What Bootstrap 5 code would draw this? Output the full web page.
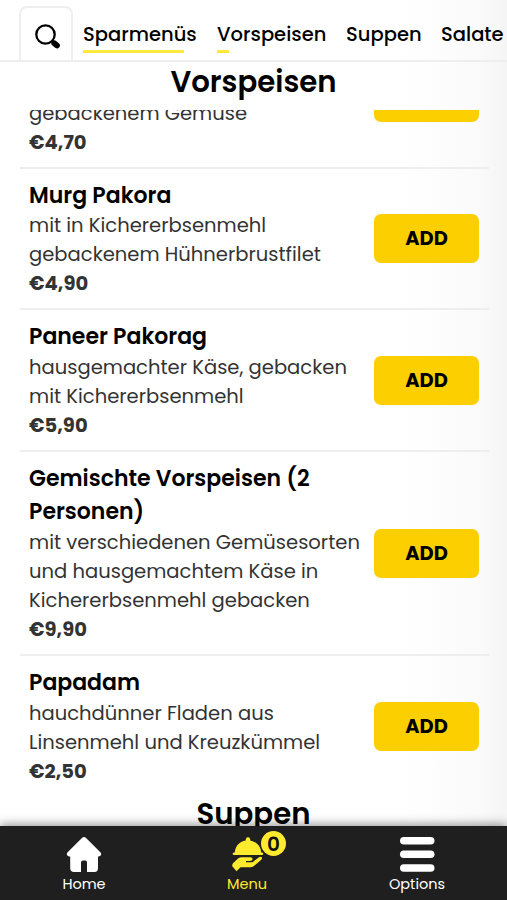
<!DOCTYPE html>
<html lang="de">
<head>
<meta charset="utf-8">
<meta name="viewport" content="width=device-width, initial-scale=1">
<title>Speisekarte</title>
<link href="https://cdn.jsdelivr.net/npm/bootstrap@5.3.0/dist/css/bootstrap.min.css" rel="stylesheet">
<style>
body{font-family:Poppins,Inter,"Open Sans",sans-serif;background:linear-gradient(90deg,#fff 0 400px,#fdfdfd 435px,#fafafa 480px,#f5f5f5 507px);color:#333}
.app-shell{height:900px}
.top-nav{height:62px;border-bottom:2px solid #eee;padding-left:19px}
.search-tab{width:54px;height:56px;border:2px solid #eee;border-bottom:0;border-radius:8px 8px 0 0;flex:none;padding:14px 0 0 13px;margin-bottom:-2px}
.search-tab svg{display:block}
.cat-link{font-size:19.5px;font-weight:500;line-height:32px;color:#000;text-decoration:none;white-space:nowrap;flex:none;height:41px}
.cat-link::after{content:"";display:block;height:3px;background:#ffe83e;width:var(--seen,0);margin-top:-1px}
.cat-1{margin-left:10px;width:134px;--seen:101px}
.cat-2{width:129px;--seen:12px}
.cat-3{width:95px}
.section-title{font-size:29.2px;font-weight:600;line-height:38px;color:#000;margin:0;text-align:center}
.title-bar{height:48px;padding-top:1px}
.title-next{margin-top:-1.5px}
.dish{margin:0 18px 0 20px;padding:10px 10px 10.1px 9px;border-bottom:2px solid #eee}
.dish-cut{height:58.6px;align-items:flex-end!important;padding-bottom:9.3px}
.dish-name{font-size:22px;font-weight:600;line-height:33px;color:#000;margin:0 0 -.7px}
.dish-text{font-size:19.56px;line-height:29.2px;margin:0;white-space:nowrap}
.dish-price{font-size:19.56px;font-weight:700;line-height:29.2px;margin:-.2px 0 0}
.btn-add{width:105px;height:49px;border-radius:7px;background:#fccf00;color:#000;font-size:19.4px;font-weight:700;flex:none;padding:0;border:0}
.btn-add:hover{background:#f0c500}
.btn-cut{margin-bottom:35.8px}
.bottom-nav{height:74px;background:#1f1f1f;box-shadow:0 -2px 9px rgba(0,0,0,.4);z-index:2;padding-top:10px}
.tab-item{color:#fff;text-decoration:none;font-size:14.5px;line-height:22px;width:100px}
.tab-item svg{display:block}
.tab-home{margin-left:34px}
.tab-menu{margin-left:63px}
.tab-opts{margin-left:70px}
.tab-on{color:#ffeb2e}
.count-dot{left:64px;top:-5px;width:25px;height:25px;background:#ffeb2e;color:#111;font-size:20px;font-weight:600;line-height:26px}
</style>
</head>
<body>
<div class="app-shell d-flex flex-column overflow-hidden">
  <nav class="top-nav d-flex align-items-end overflow-hidden flex-shrink-0">
    <a class="search-tab" href="#" aria-label="Suche">
      <svg width="28" height="28" viewBox="0 0 28 28" fill="none" stroke="#000"><circle cx="11.500" cy="12.500" r="9.200" stroke-width="2.300"/><path d="M18 18.700l2.300 2.200" stroke-width="2.800"/><path d="M20.300 21.300l2.700 2.200" stroke-width="5.800" stroke-linecap="round"/></svg>
    </a>
    <a class="cat-link cat-1" href="#">Sparmenüs</a>
    <a class="cat-link cat-2" href="#">Vorspeisen</a>
    <a class="cat-link cat-3" href="#">Suppen</a>
    <a class="cat-link" href="#">Salate</a>
  </nav>
  <div class="title-bar flex-shrink-0"><h2 class="section-title">Vorspeisen</h2></div>
  <main class="flex-grow-1 overflow-hidden">
    <div class="dish dish-cut d-flex justify-content-between overflow-hidden">
      <div><p class="dish-text">gebackenem Gemüse</p><p class="dish-price">€4,70</p></div>
      <button class="btn btn-add btn-cut" type="button" aria-label="Add"></button>
    </div>
    <div class="dish d-flex justify-content-between align-items-center">
      <div><h3 class="dish-name">Murg Pakora</h3><p class="dish-text">mit in Kichererbsenmehl<br>gebackenem Hühnerbrustfilet</p><p class="dish-price">€4,90</p></div>
      <button class="btn btn-add" type="button">ADD</button>
    </div>
    <div class="dish d-flex justify-content-between align-items-center">
      <div><h3 class="dish-name">Paneer Pakorag</h3><p class="dish-text">hausgemachter Käse, gebacken<br>mit Kichererbsenmehl</p><p class="dish-price">€5,90</p></div>
      <button class="btn btn-add" type="button">ADD</button>
    </div>
    <div class="dish d-flex justify-content-between align-items-center">
      <div><h3 class="dish-name">Gemischte Vorspeisen (2<br>Personen)</h3><p class="dish-text">mit verschiedenen Gemüsesorten<br>und hausgemachtem Käse in<br>Kichererbsenmehl gebacken</p><p class="dish-price">€9,90</p></div>
      <button class="btn btn-add" type="button">ADD</button>
    </div>
    <div class="dish d-flex justify-content-between align-items-center border-0">
      <div><h3 class="dish-name">Papadam</h3><p class="dish-text">hauchdünner Fladen aus<br>Linsenmehl und Kreuzkümmel</p><p class="dish-price">€2,50</p></div>
      <button class="btn btn-add" type="button">ADD</button>
    </div>
    <h2 class="section-title title-next">Suppen</h2>
  </main>
  <nav class="bottom-nav d-flex position-relative flex-shrink-0">
    <a class="tab-item tab-home d-flex flex-column align-items-center" href="#">
      <svg width="36" height="37" viewBox="0 0 36 37" fill="#fff"><path d="M16.200 1.800Q18 .2 19.800 1.800L34.600 16.400Q36.400 19.500 33 20.500H32V32Q32 36 28.500 36H21V26.500Q21 24.500 19.500 24.500H17Q15 24.500 15 26.500V36H8Q4.200 36 4.200 32V20.500H3Q-.4 19.500 1.400 16.400Z"/></svg>
      <span>Home</span>
    </a>
    <a class="tab-item tab-menu tab-on d-flex flex-column align-items-center position-relative" href="#">
      <svg width="36" height="37" viewBox="0 0 36 37" fill="#ffeb2e"><path d="M5.800 17C6 10.500 10 5.800 16.800 4.600Q16.300 1.300 19 1.300T21.200 4.600C28 5.800 32 10.500 32.200 17Z"/><rect x="3.700" y="16.500" width="30.500" height="2.500" rx="1.250"/><path d="M4 27.200L9 22.500Q10.800 21.200 13 21.200H21.500Q23.800 21.400 23.600 23.200Q23.200 25 21 25H17V26.200H23.500L30 21.300Q32.200 20.200 33 21.700Q33.200 23 32 24L24.500 30.300Q23.300 31.300 21.500 31.300H11.500L7.500 35.200L3.300 30.200Q3 28.400 4 27.200Z"/></svg>
      <span>Menu</span>
      <b class="count-dot position-absolute rounded-circle text-center">0</b>
    </a>
    <a class="tab-item tab-opts d-flex flex-column align-items-center" href="#">
      <svg width="36" height="37" viewBox="0 0 36 37" fill="#fff"><rect x="1" y="1" width="34.500" height="7.600" rx="3.800"/><rect x="1" y="14.500" width="34.500" height="7.600" rx="3.800"/><rect x="1" y="28.200" width="34.500" height="7.600" rx="3.800"/></svg>
      <span>Options</span>
    </a>
  </nav>
</div>
<script src="https://cdn.jsdelivr.net/npm/bootstrap@5.3.0/dist/js/bootstrap.bundle.min.js"></script>
</body>
</html>
